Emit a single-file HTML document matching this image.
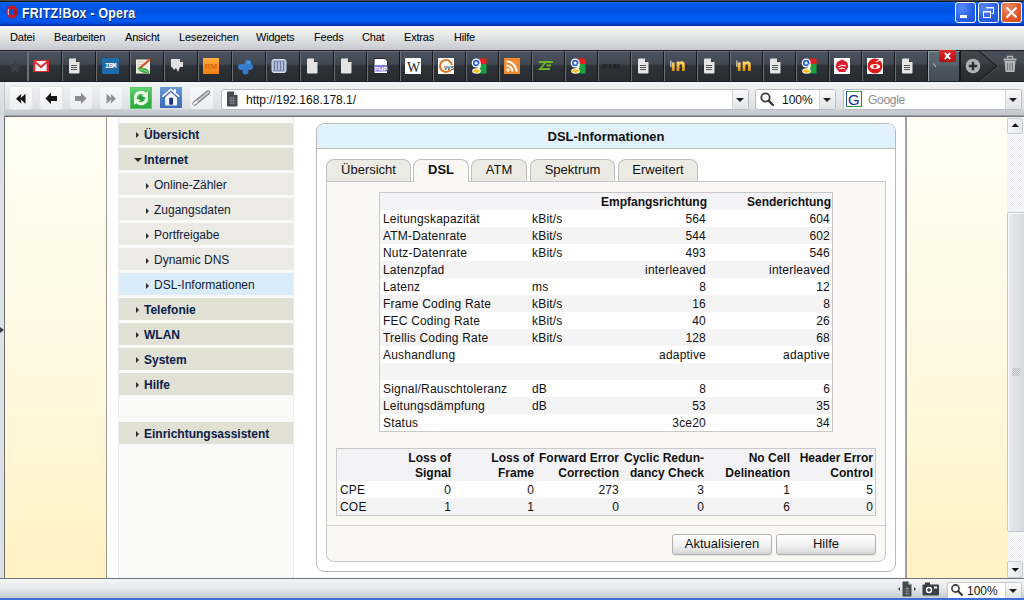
<!DOCTYPE html>
<html><head><meta charset="utf-8"><style>
*{margin:0;padding:0;box-sizing:border-box}
html,body{width:1024px;height:600px;overflow:hidden}
body{position:relative;font-family:"Liberation Sans",sans-serif;background:#fff;color:#000}
.a{position:absolute}
.t{position:absolute;white-space:nowrap;line-height:1}
.nb{font-weight:bold;font-size:12px;color:#0a2048}
.ns{font-size:12px;color:#101c38}
.tb{font-weight:bold;font-size:12px;color:#111}
.tr{font-size:12px;color:#111;letter-spacing:0.2px}
</style></head><body>

<!-- TITLE BAR -->
<div class="a" style="left:0;top:0;width:1024px;height:26px;background:linear-gradient(#4a4a4a 0,#4a4a4a 1px,#101828 1px,#101828 2px,#1a6cff 2px,#0058e8 4px,#0052de 12px,#005ef6 17px,#0058ee 21px,#0044d4 24px,#0030a0 25px,#0030a0 26px)"></div>
<svg class="a" style="left:5px;top:4px" width="14" height="16" viewBox="0 0 14 16"><ellipse cx="7.1" cy="8" rx="3.9" ry="4.9" fill="none" stroke="#c41c24" stroke-width="3.6"/><path d="M3.6 5.2 Q2.8 8 3.6 10.8" stroke="#ffb0a0" stroke-width="1.1" fill="none"/><path d="M10.8 6 Q11.4 8.5 10.6 11" stroke="#8a1018" stroke-width="1" fill="none"/></svg>
<div class="t" style="left:22px;top:5px;font:bold 14px 'Liberation Sans';color:#fff;text-shadow:1px 1px 0 #0a1e6e;letter-spacing:0.3px;transform:scaleX(0.88);transform-origin:0 0">FRITZ!Box - Opera</div>

<!-- window buttons -->
<div class="a" style="left:955px;top:2px;width:21px;height:21px;border:1px solid #fff;border-radius:3px;background:radial-gradient(circle at 30% 25%,#5a8cf8,#2a62ea 55%,#1e52d8)"></div>
<div class="a" style="left:960px;top:15px;width:7px;height:3px;background:#fff"></div>
<div class="a" style="left:978px;top:2px;width:21px;height:21px;border:1px solid #fff;border-radius:3px;background:radial-gradient(circle at 30% 25%,#5a8cf8,#2a62ea 55%,#1e52d8)"></div>
<svg class="a" style="left:978px;top:2px" width="21" height="21" viewBox="0 0 21 21"><path d="M8.5 5.5 H15.5 V11.5 H13.5" fill="none" stroke="#fff" stroke-width="1"/><path d="M8.5 5 H15.5 V6.5 H8.5Z" fill="#fff"/><rect x="5.5" y="9.5" width="7" height="6" fill="none" stroke="#fff" stroke-width="1"/><rect x="5.5" y="9" width="7" height="1.5" fill="#fff"/></svg>
<div class="a" style="left:1001px;top:2px;width:21px;height:21px;border:1px solid #fff;border-radius:3px;background:radial-gradient(circle at 30% 25%,#f08a68,#e05a30 55%,#d04818)"></div>
<svg class="a" style="left:1001px;top:2px" width="21" height="21" viewBox="0 0 21 21"><path d="M5.5 5.5 L15.5 15.5 M15.5 5.5 L5.5 15.5" stroke="#fff" stroke-width="2"/></svg>

<!-- MENU BAR -->
<div class="a" style="left:0;top:26px;width:1024px;height:24px;background:linear-gradient(#f6f7f6,#e8e9ea 35%,#d4d6d9 75%,#c6c9cd)"></div>
<div class="t" style="top:32px;left:10px;font-size:11px;letter-spacing:-0.2px">Datei</div>
<div class="t" style="top:32px;left:54px;font-size:11px;letter-spacing:-0.2px">Bearbeiten</div>
<div class="t" style="top:32px;left:125px;font-size:11px;letter-spacing:-0.2px">Ansicht</div>
<div class="t" style="top:32px;left:179px;font-size:11px;letter-spacing:-0.2px">Lesezeichen</div>
<div class="t" style="top:32px;left:256px;font-size:11px;letter-spacing:-0.2px">Widgets</div>
<div class="t" style="top:32px;left:314px;font-size:11px;letter-spacing:-0.2px">Feeds</div>
<div class="t" style="top:32px;left:362px;font-size:11px;letter-spacing:-0.2px">Chat</div>
<div class="t" style="top:32px;left:404px;font-size:11px;letter-spacing:-0.2px">Extras</div>
<div class="t" style="top:32px;left:454px;font-size:11px;letter-spacing:-0.2px">Hilfe</div>

<!-- BOOKMARK BAR -->
<!--BM-->
<div class="a" style="left:0;top:50px;width:1024px;height:32px;background:#1c1f23"></div>
<div class="a" style="left:0;top:51px;width:28px;height:30px;border-top:1px solid #5c6268;border-right:1px solid #6a7076;background:linear-gradient(#4a525d 0,#414852 12px,#363c44 13px,#2d3239 14px,#272b31 29px,#20242a 30px)"></div>
<svg class="a" style="left:7px;top:59px" width="16" height="16" viewBox="0 0 16 16"><path d="M8 1.5 L10 6 L15 6.3 L11.2 9.5 L12.5 14.5 L8 11.7 L3.5 14.5 L4.8 9.5 L1 6.3 L6 6 Z" fill="#3a3f45"/></svg>
<div class="a" style="left:28px;top:51px;width:34px;height:30px;border-left:1px solid #6a7076;border-right:1px solid #15181b;border-top:1px solid #6a727c;background:linear-gradient(#4a525d 0,#414852 12px,#363c44 13px,#2d3239 14px,#272b31 29px,#20242a 30px)"></div>
<svg class="a" style="left:33px;top:60px" width="16" height="12" viewBox="0 0 16 12"><rect x="0.5" y="0.5" width="15" height="11" fill="#fff4f4" stroke="#d8282e"/><path d="M1.2 1.2 L8 7 L14.8 1.2" fill="none" stroke="#d8282e" stroke-width="1.8"/><path d="M1.5 1.5 V11 M14.5 1.5 V11" stroke="#d8282e" stroke-width="1.6"/></svg>
<div class="a" style="left:62px;top:51px;width:34px;height:30px;border-left:1px solid #6a7076;border-right:1px solid #15181b;border-top:1px solid #6a727c;background:linear-gradient(#4a525d 0,#414852 12px,#363c44 13px,#2d3239 14px,#272b31 29px,#20242a 30px)"></div>
<svg class="a" style="left:68px;top:58px" width="12" height="16" viewBox="0 0 12 16"><path d="M1 1.5 Q1 0.5 2 0.5 L8 0.5 L11.5 4 L11.5 14.5 Q11.5 15.5 10.5 15.5 L2 15.5 Q1 15.5 1 14.5 Z" fill="#e4e4e4"/><path d="M8 0.5 L11.5 4 L8 4 Z" fill="#333"/><path d="M3 7.5 H9 M3 9.5 H9 M3 11.5 H9" stroke="#55585c" stroke-width="1"/></svg>
<div class="a" style="left:96px;top:51px;width:34px;height:30px;border-left:1px solid #6a7076;border-right:1px solid #15181b;border-top:1px solid #6a727c;background:linear-gradient(#4a525d 0,#414852 12px,#363c44 13px,#2d3239 14px,#272b31 29px,#20242a 30px)"></div>
<div class="a" style="left:102px;top:58px;width:17px;height:16px;background:#1f6aa8"></div><div class="t" style="left:102px;width:17px;text-align:center;top:62px;font:bold 7px 'Liberation Mono';color:#fff;letter-spacing:-0.5px">IBM</div>
<div class="a" style="left:130px;top:51px;width:34px;height:30px;border-left:1px solid #6a7076;border-right:1px solid #15181b;border-top:1px solid #6a727c;background:linear-gradient(#4a525d 0,#414852 12px,#363c44 13px,#2d3239 14px,#272b31 29px,#20242a 30px)"></div>
<svg class="a" style="left:135px;top:58px" width="17" height="16" viewBox="0 0 17 16"><rect x="1" y="1.5" width="14" height="14" fill="#f2f0e4"/><path d="M2.5 4 H9 M2.5 6.5 H7 M2.5 9 H6" stroke="#c8c0a8" stroke-width="0.8"/><path d="M5.5 9.5 L15.5 1" stroke="#d84a28" stroke-width="2.2"/><path d="M4.5 10.5 L5.8 9.3" stroke="#703020" stroke-width="1.5"/><ellipse cx="8.5" cy="12.3" rx="6" ry="2.3" transform="rotate(18 8.5 12.3)" fill="#3aa83a"/><path d="M4 11 Q9 12 13 14" stroke="#c8f0c0" stroke-width="0.7" fill="none"/></svg>
<div class="a" style="left:164px;top:51px;width:34px;height:30px;border-left:1px solid #6a7076;border-right:1px solid #15181b;border-top:1px solid #6a727c;background:linear-gradient(#4a525d 0,#414852 12px,#363c44 13px,#2d3239 14px,#272b31 29px,#20242a 30px)"></div>
<svg class="a" style="left:169px;top:58px" width="16" height="16" viewBox="0 0 16 16"><path d="M2 1 L11 1 L14 4 L14 9 L11 9 L9 14 L7 10 L5 12 L3 9 L2 9 Z" fill="#e0e0e0"/><path d="M11 1 L14 4 L11 4Z" fill="#333"/></svg>
<div class="a" style="left:198px;top:51px;width:34px;height:30px;border-left:1px solid #6a7076;border-right:1px solid #15181b;border-top:1px solid #6a727c;background:linear-gradient(#4a525d 0,#414852 12px,#363c44 13px,#2d3239 14px,#272b31 29px,#20242a 30px)"></div>
<div class="a" style="left:203px;top:58px;width:16px;height:16px;background:linear-gradient(#ffb040,#f08010)"></div><div class="t" style="left:203px;width:16px;text-align:center;top:62px;font:bold 8px 'Liberation Sans';color:#e06010">RM</div>
<div class="a" style="left:232px;top:51px;width:34px;height:30px;border-left:1px solid #6a7076;border-right:1px solid #15181b;border-top:1px solid #6a727c;background:linear-gradient(#4a525d 0,#414852 12px,#363c44 13px,#2d3239 14px,#272b31 29px,#20242a 30px)"></div>
<svg class="a" style="left:237px;top:58px" width="17" height="17" viewBox="0 0 17 17"><g fill="#3a7ccc"><circle cx="4" cy="9" r="3"/><circle cx="13" cy="9" r="3"/><circle cx="8.5" cy="13.5" r="3"/><circle cx="11" cy="5" r="3.2"/><rect x="4" y="6" width="9" height="6"/></g><circle cx="11.5" cy="4.5" r="1.5" fill="#5a9ae0"/></svg>
<div class="a" style="left:266px;top:51px;width:34px;height:30px;border-left:1px solid #6a7076;border-right:1px solid #15181b;border-top:1px solid #6a727c;background:linear-gradient(#4a525d 0,#414852 12px,#363c44 13px,#2d3239 14px,#272b31 29px,#20242a 30px)"></div>
<svg class="a" style="left:271px;top:58px" width="16" height="16" viewBox="0 0 16 16"><rect x="1" y="1.5" width="14" height="13" rx="2" fill="#a8b4d0" stroke="#d8e0f0"/><rect x="3" y="3.5" width="10" height="9" fill="#6878a8"/><path d="M5 4 V12 M8 4 V12 M11 4 V12" stroke="#e8ecf8" stroke-width="1.2"/></svg>
<div class="a" style="left:300px;top:51px;width:34px;height:30px;border-left:1px solid #6a7076;border-right:1px solid #15181b;border-top:1px solid #6a727c;background:linear-gradient(#4a525d 0,#414852 12px,#363c44 13px,#2d3239 14px,#272b31 29px,#20242a 30px)"></div>
<svg class="a" style="left:306px;top:58px" width="12" height="16" viewBox="0 0 12 16"><path d="M1 1.5 Q1 0.5 2 0.5 L8 0.5 L11.5 4 L11.5 14.5 Q11.5 15.5 10.5 15.5 L2 15.5 Q1 15.5 1 14.5 Z" fill="#e4e4e4"/><path d="M8 0.5 L11.5 4 L8 4 Z" fill="#333"/></svg>
<div class="a" style="left:334px;top:51px;width:33px;height:30px;border-left:1px solid #6a7076;border-right:1px solid #15181b;border-top:1px solid #6a727c;background:linear-gradient(#4a525d 0,#414852 12px,#363c44 13px,#2d3239 14px,#272b31 29px,#20242a 30px)"></div>
<svg class="a" style="left:340px;top:58px" width="12" height="16" viewBox="0 0 12 16"><path d="M1 1.5 Q1 0.5 2 0.5 L8 0.5 L11.5 4 L11.5 14.5 Q11.5 15.5 10.5 15.5 L2 15.5 Q1 15.5 1 14.5 Z" fill="#e4e4e4"/><path d="M8 0.5 L11.5 4 L8 4 Z" fill="#333"/></svg>
<div class="a" style="left:367px;top:51px;width:33px;height:30px;border-left:1px solid #6a7076;border-right:1px solid #15181b;border-top:1px solid #6a727c;background:linear-gradient(#4a525d 0,#414852 12px,#363c44 13px,#2d3239 14px,#272b31 29px,#20242a 30px)"></div>
<svg class="a" style="left:372px;top:58px" width="17" height="16" viewBox="0 0 17 16"><path d="M2 0.5 H13 L15.5 3 V15.5 H2 Z" fill="#fff" stroke="#222"/><rect x="2.5" y="7" width="13" height="6.5" fill="#8080d8"/><text x="9" y="12.6" font-family="Liberation Sans" font-size="6" font-weight="bold" fill="#fff" text-anchor="middle">PHP</text></svg>
<div class="a" style="left:400px;top:51px;width:33px;height:30px;border-left:1px solid #6a7076;border-right:1px solid #15181b;border-top:1px solid #6a727c;background:linear-gradient(#4a525d 0,#414852 12px,#363c44 13px,#2d3239 14px,#272b31 29px,#20242a 30px)"></div>
<div class="a" style="left:405px;top:58px;width:16px;height:16px;background:#fff"></div><div class="t" style="left:405px;width:16px;text-align:center;top:60px;font:14px 'Liberation Serif';color:#222;letter-spacing:-1px">W</div>
<div class="a" style="left:433px;top:51px;width:33px;height:30px;border-left:1px solid #6a7076;border-right:1px solid #15181b;border-top:1px solid #6a727c;background:linear-gradient(#4a525d 0,#414852 12px,#363c44 13px,#2d3239 14px,#272b31 29px,#20242a 30px)"></div>
<svg class="a" style="left:438px;top:58px" width="16" height="16" viewBox="0 0 16 16"><rect width="16" height="16" fill="#fff"/><circle cx="8" cy="8" r="6" fill="none" stroke="#e07828" stroke-width="2.2"/><rect x="6" y="7" width="10" height="5" fill="#fff"/><text x="11" y="11.5" font-family="Liberation Sans" font-size="5" font-weight="bold" fill="#333" text-anchor="middle">VVS</text></svg>
<div class="a" style="left:466px;top:51px;width:33px;height:30px;border-left:1px solid #6a7076;border-right:1px solid #15181b;border-top:1px solid #6a727c;background:linear-gradient(#4a525d 0,#414852 12px,#363c44 13px,#2d3239 14px,#272b31 29px,#20242a 30px)"></div>
<svg class="a" style="left:471px;top:58px" width="16" height="16" viewBox="0 0 16 16"><rect x="8" y="0.5" width="7.5" height="5.5" fill="#e42020"/><rect x="7" y="6" width="8.5" height="9.5" fill="#1ca040"/><circle cx="5.2" cy="5" r="4.5" fill="#fff"/><circle cx="5.2" cy="5" r="3.3" fill="#2a62d8"/><circle cx="5.2" cy="5" r="1.5" fill="#fff"/><path d="M8.5 6 Q9.5 10 6 11" stroke="#fff" stroke-width="2.2" fill="none"/><ellipse cx="5.5" cy="13" rx="4.3" ry="2.7" fill="#fff"/><ellipse cx="5.5" cy="13" rx="3.3" ry="1.8" fill="#f6c020"/></svg>
<div class="a" style="left:499px;top:51px;width:33px;height:30px;border-left:1px solid #6a7076;border-right:1px solid #15181b;border-top:1px solid #6a727c;background:linear-gradient(#4a525d 0,#414852 12px,#363c44 13px,#2d3239 14px,#272b31 29px,#20242a 30px)"></div>
<svg class="a" style="left:504px;top:58px" width="16" height="16" viewBox="0 0 16 16"><rect width="16" height="16" fill="#f08a30"/><circle cx="4" cy="12" r="1.8" fill="#fff"/><path d="M2.5 7.5 A6 6 0 0 1 8.5 13.5 M2.5 3.5 A10 10 0 0 1 12.5 13.5" stroke="#fff" stroke-width="2" fill="none"/></svg>
<div class="a" style="left:532px;top:51px;width:33px;height:30px;border-left:1px solid #6a7076;border-right:1px solid #15181b;border-top:1px solid #6a727c;background:linear-gradient(#4a525d 0,#414852 12px,#363c44 13px,#2d3239 14px,#272b31 29px,#20242a 30px)"></div>
<svg class="a" style="left:537px;top:58px" width="17" height="16" viewBox="0 0 17 16"><path d="M2 4 H9 L3 11 H9 M10 4 H16 M9.5 7.5 H14 M8 11 H13" stroke="#6cb820" stroke-width="1.8" fill="none"/></svg>
<div class="a" style="left:565px;top:51px;width:33px;height:30px;border-left:1px solid #6a7076;border-right:1px solid #15181b;border-top:1px solid #6a727c;background:linear-gradient(#4a525d 0,#414852 12px,#363c44 13px,#2d3239 14px,#272b31 29px,#20242a 30px)"></div>
<svg class="a" style="left:570px;top:58px" width="16" height="16" viewBox="0 0 16 16"><rect x="8" y="0.5" width="7.5" height="5.5" fill="#e42020"/><rect x="7" y="6" width="8.5" height="9.5" fill="#1ca040"/><circle cx="5.2" cy="5" r="4.5" fill="#fff"/><circle cx="5.2" cy="5" r="3.3" fill="#2a62d8"/><circle cx="5.2" cy="5" r="1.5" fill="#fff"/><path d="M8.5 6 Q9.5 10 6 11" stroke="#fff" stroke-width="2.2" fill="none"/><ellipse cx="5.5" cy="13" rx="4.3" ry="2.7" fill="#fff"/><ellipse cx="5.5" cy="13" rx="3.3" ry="1.8" fill="#f6c020"/></svg>
<div class="a" style="left:598px;top:51px;width:33px;height:30px;border-left:1px solid #6a7076;border-right:1px solid #15181b;border-top:1px solid #6a727c;background:linear-gradient(#4a525d 0,#414852 12px,#363c44 13px,#2d3239 14px,#272b31 29px,#20242a 30px)"></div>
<div class="t" style="left:600px;width:22px;text-align:center;top:62px;font:7px 'Liberation Sans';color:#101214;letter-spacing:0.2px">areas</div>
<div class="a" style="left:631px;top:51px;width:33px;height:30px;border-left:1px solid #6a7076;border-right:1px solid #15181b;border-top:1px solid #6a727c;background:linear-gradient(#4a525d 0,#414852 12px,#363c44 13px,#2d3239 14px,#272b31 29px,#20242a 30px)"></div>
<svg class="a" style="left:637px;top:58px" width="12" height="16" viewBox="0 0 12 16"><path d="M1 1.5 Q1 0.5 2 0.5 L8 0.5 L11.5 4 L11.5 14.5 Q11.5 15.5 10.5 15.5 L2 15.5 Q1 15.5 1 14.5 Z" fill="#e4e4e4"/><path d="M8 0.5 L11.5 4 L8 4 Z" fill="#333"/><path d="M3 7.5 H9 M3 9.5 H9 M3 11.5 H9" stroke="#55585c" stroke-width="1"/></svg>
<div class="a" style="left:664px;top:51px;width:33px;height:30px;border-left:1px solid #6a7076;border-right:1px solid #15181b;border-top:1px solid #6a727c;background:linear-gradient(#4a525d 0,#414852 12px,#363c44 13px,#2d3239 14px,#272b31 29px,#20242a 30px)"></div>
<svg class="a" style="left:669px;top:58px" width="17" height="16" viewBox="0 0 17 16"><defs><linearGradient id="ig677" x1="0" y1="0" x2="0" y2="1"><stop offset="0" stop-color="#ffe080"/><stop offset="0.5" stop-color="#f4b830"/><stop offset="1" stop-color="#d88a10"/></linearGradient></defs><rect x="2.8" y="4.5" width="2.8" height="8.5" fill="url(#ig677)"/><path d="M7.6 13 V3.5 H10.4 V4.3 Q12 3 14 3.5 Q15.8 4 15.8 6.5 V13 H13 V7 Q13 6.2 12 6.2 Q10.4 6.2 10.4 7.5 V13 Z" fill="url(#ig677)"/><path d="M1.8 2.5 V9" stroke="#d0d4d8" stroke-width="1.2"/></svg>
<div class="a" style="left:697px;top:51px;width:33px;height:30px;border-left:1px solid #6a7076;border-right:1px solid #15181b;border-top:1px solid #6a727c;background:linear-gradient(#4a525d 0,#414852 12px,#363c44 13px,#2d3239 14px,#272b31 29px,#20242a 30px)"></div>
<svg class="a" style="left:703px;top:58px" width="12" height="16" viewBox="0 0 12 16"><path d="M1 1.5 Q1 0.5 2 0.5 L8 0.5 L11.5 4 L11.5 14.5 Q11.5 15.5 10.5 15.5 L2 15.5 Q1 15.5 1 14.5 Z" fill="#e4e4e4"/><path d="M8 0.5 L11.5 4 L8 4 Z" fill="#333"/><path d="M3 7.5 H9 M3 9.5 H9 M3 11.5 H9" stroke="#55585c" stroke-width="1"/></svg>
<div class="a" style="left:730px;top:51px;width:33px;height:30px;border-left:1px solid #6a7076;border-right:1px solid #15181b;border-top:1px solid #6a727c;background:linear-gradient(#4a525d 0,#414852 12px,#363c44 13px,#2d3239 14px,#272b31 29px,#20242a 30px)"></div>
<svg class="a" style="left:735px;top:58px" width="17" height="16" viewBox="0 0 17 16"><defs><linearGradient id="ig743" x1="0" y1="0" x2="0" y2="1"><stop offset="0" stop-color="#ffe080"/><stop offset="0.5" stop-color="#f4b830"/><stop offset="1" stop-color="#d88a10"/></linearGradient></defs><rect x="2.8" y="4.5" width="2.8" height="8.5" fill="url(#ig743)"/><path d="M7.6 13 V3.5 H10.4 V4.3 Q12 3 14 3.5 Q15.8 4 15.8 6.5 V13 H13 V7 Q13 6.2 12 6.2 Q10.4 6.2 10.4 7.5 V13 Z" fill="url(#ig743)"/><path d="M1.8 2.5 V9" stroke="#d0d4d8" stroke-width="1.2"/></svg>
<div class="a" style="left:763px;top:51px;width:33px;height:30px;border-left:1px solid #6a7076;border-right:1px solid #15181b;border-top:1px solid #6a727c;background:linear-gradient(#4a525d 0,#414852 12px,#363c44 13px,#2d3239 14px,#272b31 29px,#20242a 30px)"></div>
<svg class="a" style="left:769px;top:58px" width="12" height="16" viewBox="0 0 12 16"><path d="M1 1.5 Q1 0.5 2 0.5 L8 0.5 L11.5 4 L11.5 14.5 Q11.5 15.5 10.5 15.5 L2 15.5 Q1 15.5 1 14.5 Z" fill="#e4e4e4"/><path d="M8 0.5 L11.5 4 L8 4 Z" fill="#333"/><path d="M3 7.5 H9 M3 9.5 H9 M3 11.5 H9" stroke="#55585c" stroke-width="1"/></svg>
<div class="a" style="left:796px;top:51px;width:33px;height:30px;border-left:1px solid #6a7076;border-right:1px solid #15181b;border-top:1px solid #6a727c;background:linear-gradient(#4a525d 0,#414852 12px,#363c44 13px,#2d3239 14px,#272b31 29px,#20242a 30px)"></div>
<svg class="a" style="left:801px;top:58px" width="16" height="16" viewBox="0 0 16 16"><rect x="8" y="0.5" width="7.5" height="5.5" fill="#e42020"/><rect x="7" y="6" width="8.5" height="9.5" fill="#1ca040"/><circle cx="5.2" cy="5" r="4.5" fill="#fff"/><circle cx="5.2" cy="5" r="3.3" fill="#2a62d8"/><circle cx="5.2" cy="5" r="1.5" fill="#fff"/><path d="M8.5 6 Q9.5 10 6 11" stroke="#fff" stroke-width="2.2" fill="none"/><ellipse cx="5.5" cy="13" rx="4.3" ry="2.7" fill="#fff"/><ellipse cx="5.5" cy="13" rx="3.3" ry="1.8" fill="#f6c020"/></svg>
<div class="a" style="left:829px;top:51px;width:33px;height:30px;border-left:1px solid #6a7076;border-right:1px solid #15181b;border-top:1px solid #6a727c;background:linear-gradient(#4a525d 0,#414852 12px,#363c44 13px,#2d3239 14px,#272b31 29px,#20242a 30px)"></div>
<svg class="a" style="left:834px;top:58px" width="16" height="16" viewBox="0 0 16 16"><rect width="16" height="16" fill="#fff"/><path d="M3 4 L8 1.5 L13 4 L14.5 9 L11 14 L5 14 L1.5 9 Z" fill="#d82030"/><path d="M4 9 Q7 6 12 8 M5 11 Q8 9 11 11" stroke="#fff" stroke-width="1" fill="none"/></svg>
<div class="a" style="left:862px;top:51px;width:33px;height:30px;border-left:1px solid #6a7076;border-right:1px solid #15181b;border-top:1px solid #6a727c;background:linear-gradient(#4a525d 0,#414852 12px,#363c44 13px,#2d3239 14px,#272b31 29px,#20242a 30px)"></div>
<svg class="a" style="left:867px;top:58px" width="16" height="16" viewBox="0 0 16 16"><rect width="16" height="16" fill="#fff"/><circle cx="8" cy="8" r="7.5" fill="#e01818"/><ellipse cx="8" cy="8.5" rx="5" ry="2.5" fill="#fff"/><circle cx="8" cy="8.5" r="1.8" fill="#e01818"/><path d="M9 4 L13 2" stroke="#fff" stroke-width="1.2"/></svg>
<div class="a" style="left:895px;top:51px;width:33px;height:30px;border-left:1px solid #6a7076;border-right:1px solid #15181b;border-top:1px solid #6a727c;background:linear-gradient(#4a525d 0,#414852 12px,#363c44 13px,#2d3239 14px,#272b31 29px,#20242a 30px)"></div>
<svg class="a" style="left:901px;top:58px" width="12" height="16" viewBox="0 0 12 16"><path d="M1 1.5 Q1 0.5 2 0.5 L8 0.5 L11.5 4 L11.5 14.5 Q11.5 15.5 10.5 15.5 L2 15.5 Q1 15.5 1 14.5 Z" fill="#e4e4e4"/><path d="M8 0.5 L11.5 4 L8 4 Z" fill="#333"/><path d="M3 7.5 H9 M3 9.5 H9 M3 11.5 H9" stroke="#55585c" stroke-width="1"/></svg>
<div class="a" style="left:928px;top:51px;width:32px;height:30px;border-left:1px solid #9aa4ac;border-right:1px solid #15181b;border-top:1px solid #8a949c;background:linear-gradient(#5e6a74,#56616b 13px,#4c565f 15px,#444d56 30px)"></div>
<div class="a" style="left:939px;top:50px;width:17px;height:12px;border-radius:0 0 2px 2px;background:linear-gradient(#e02a2a,#b01010)"></div>
<svg class="a" style="left:939px;top:50px" width="17" height="12" viewBox="0 0 17 12"><path d="M5.8 2.8 L11.2 9.2 M11.2 2.8 L5.8 9.2" stroke="#fff" stroke-width="1.8"/></svg>
<svg class="a" style="left:933px;top:63px" width="4" height="5" viewBox="0 0 4 5"><path d="M0.5 0.5 L3 4" stroke="#c0c8d0" stroke-width="1"/></svg>
<div class="a" style="left:960px;top:51px;width:64px;height:30px;border-left:1px solid #15181b;background:linear-gradient(#40464e,#3a4047 12px,#30353b 14px,#262a2f 30px)"></div>
<svg class="a" style="left:960px;top:51px" width="64" height="30" viewBox="0 0 64 30"><path d="M19 0 L37 15 L19 30 L64 30 L64 0 Z" fill="#ffffff" fill-opacity="0.05"/><path d="M19 0 L37 15 L19 30" stroke="#1a1d21" stroke-width="1.2" fill="none"/><path d="M20.5 0 L38.5 15 L20.5 30" stroke="#5a6068" stroke-width="0.6" fill="none"/><circle cx="13" cy="15" r="7.3" fill="#b0b2b5"/><path d="M13 10.8 V19.2 M8.8 15 H17.2" stroke="#2a2d30" stroke-width="2.4"/><path d="M43.5 8.5 H56.5" stroke="#b4b6b8" stroke-width="2"/><path d="M47.5 7.5 V5.5 H52.5 V7.5" stroke="#b4b6b8" stroke-width="1.4" fill="none"/><path d="M44.5 10 H55.5 L54.5 21 H45.5 Z" fill="#b4b6b8"/><path d="M47.6 12 V19.5 M50 12 V19.5 M52.4 12 V19.5" stroke="#6a6d70" stroke-width="0.9"/></svg>
<!--/BM-->

<!-- ADDRESS BAR -->
<div class="a" style="left:0;top:82px;width:1024px;height:35px;background:linear-gradient(#f2f3f4 0,#e8e9ec 14px,#dcdee2 27px,#c9cdd2 28px,#c4c8cd 33px,#74787e 34px,#74787e 35px)"></div>

<div class="a" style="left:0;top:82px;width:4px;height:34px;background:linear-gradient(#e4e7eb,#d6dade)"></div>
<div class="a" style="left:4px;top:82px;width:1px;height:34px;background:#c4c8cd"></div>
<!-- nav buttons -->
<div class="a" style="left:10px;top:87px;width:22px;height:22px;border-radius:3px;background:linear-gradient(#fbfbfb,#eeeff1);box-shadow:0 0 0 1px #e6e7ea"></div>
<div class="a" style="left:40px;top:87px;width:22px;height:22px;border-radius:3px;background:linear-gradient(#fbfbfb,#eeeff1);box-shadow:0 0 0 1px #e6e7ea"></div>
<div class="a" style="left:70px;top:87px;width:22px;height:22px;border-radius:3px;background:linear-gradient(#f6f7f8,#eceef0);"></div>
<div class="a" style="left:100px;top:87px;width:22px;height:22px;border-radius:3px;background:linear-gradient(#f6f7f8,#eceef0);"></div>
<svg class="a" style="left:10px;top:87px" width="22" height="22" viewBox="0 0 22 22"><path d="M6 11.8 L11.5 6.8 L10.5 11.8 L11.5 16.8 Z M10 11.8 L15.5 6.8 L15.5 16.8 Z" fill="#151515"/></svg>
<svg class="a" style="left:40px;top:87px" width="22" height="22" viewBox="0 0 22 22"><path d="M5.5 11.5 L11 5.5 L11 9 L17 9 L17 14 L11 14 L11 17 Z" fill="#151515"/></svg>
<svg class="a" style="left:70px;top:87px" width="22" height="22" viewBox="0 0 22 22"><path d="M16.5 11.5 L11 5.5 L11 9 L5 9 L5 14 L11 14 L11 17 Z" fill="#8e8e8e"/></svg>
<svg class="a" style="left:100px;top:87px" width="22" height="22" viewBox="0 0 22 22"><path d="M16 11.8 L10.5 6.8 L11.5 11.8 L10.5 16.8 Z M12 11.8 L6.5 6.8 L6.5 16.8 Z" fill="#8e8e8e"/></svg>
<!-- reload -->
<div class="a" style="left:130px;top:87px;width:22px;height:22px;background:linear-gradient(#6ad478,#3dbb50 40%,#2aa83e);box-shadow:inset 0 0 0 1px #58c868"></div>
<svg class="a" style="left:130px;top:87px" width="22" height="22" viewBox="0 0 22 22"><circle cx="11" cy="11" r="2.5" fill="#2c9a3c"/><path d="M5.3 11.5 A5.7 5.7 0 0 1 14.8 6.8" stroke="#f0fbe8" stroke-width="3" fill="none"/><path d="M18 4 L17.8 11 L11.5 9 Z" fill="#f0fbe8"/><path d="M16.7 10.5 A5.7 5.7 0 0 1 7.2 15.2" stroke="#f0fbe8" stroke-width="3" fill="none"/><path d="M4 18 L4.2 11 L10.5 13 Z" fill="#f0fbe8"/></svg>
<!-- home -->
<div class="a" style="left:160px;top:87px;width:22px;height:21px;background:linear-gradient(#6e9ed8,#4a80c8 50%,#3a6cb8)"></div>
<svg class="a" style="left:160px;top:87px" width="22" height="22" viewBox="0 0 22 22"><path d="M5.2 10 L11 5 L17 10 L17 18.4 L5.2 18.4 Z" fill="#f2f6ff"/><path d="M2.3 10.2 L11 2.8 L19.3 10.2" stroke="#2c58a8" stroke-width="3.4" fill="none"/><path d="M2.3 9.7 L11 2.3 L19.3 9.7" stroke="#f6f9ff" stroke-width="2" fill="none"/><rect x="14" y="2" width="2" height="4.5" fill="#f6f9ff"/><rect x="9.2" y="10.8" width="3.8" height="7" rx="0.8" fill="#1c2e90"/></svg>
<!-- wand -->
<div class="a" style="left:190px;top:87px;width:23px;height:22px;border-radius:3px;background:linear-gradient(#f6f7f8,#eceef0)"></div>
<svg class="a" style="left:190px;top:87px" width="23" height="22" viewBox="0 0 23 22"><path d="M4.5 16.5 L18 5.5" stroke="#7a7c80" stroke-width="4.2" stroke-linecap="round"/><path d="M4.5 16.5 L18 5.5" stroke="#c8cacc" stroke-width="2.2" stroke-linecap="round"/><path d="M4.2 16.8 L6.5 14.9" stroke="#fff" stroke-width="2" stroke-linecap="round"/></svg>

<!-- address field -->
<div class="a" style="left:221px;top:89px;width:528px;height:21px;border:1px solid #b9bcc1;border-radius:3px;background:#fff"></div>
<div class="a" style="left:732px;top:90px;width:16px;height:19px;border-left:1px solid #d0d3d7;border-radius:0 2px 2px 0;background:linear-gradient(#fafafa,#e2e4e7)"></div>
<div class="a" style="left:736px;top:98px;width:0;height:0;border-top:4px solid #222;border-left:4px solid transparent;border-right:4px solid transparent"></div>
<svg class="a" style="left:226px;top:91px" width="12" height="16" viewBox="0 0 12 16"><path d="M1 1.5 Q1 0.5 2 0.5 L8 0.5 L11.5 4 L11.5 14.5 Q11.5 15.5 10.5 15.5 L2 15.5 Q1 15.5 1 14.5 Z" fill="#45484d"/><path d="M8 0.5 L11.5 4 L8 4 Z" fill="#e8e8e8"/><path d="M3 7 H9.5 M3 9.5 H9.5 M3 12 H9.5 M5 5.5 V13.5 M7.5 5.5 V13.5" stroke="#7e8288" stroke-width="0.9"/></svg>
<div class="t" style="left:246px;top:94px;font-size:12px;color:#111">http://192.168.178.1/</div>

<!-- zoom field -->
<div class="a" style="left:755px;top:89px;width:81px;height:21px;border:1px solid #b9bcc1;border-radius:3px;background:#fff"></div>
<div class="a" style="left:819px;top:90px;width:16px;height:19px;border-left:1px solid #d0d3d7;border-radius:0 2px 2px 0;background:linear-gradient(#fafafa,#e2e4e7)"></div>
<div class="a" style="left:823px;top:98px;width:0;height:0;border-top:4px solid #222;border-left:4px solid transparent;border-right:4px solid transparent"></div>
<svg class="a" style="left:759px;top:91px" width="16" height="16" viewBox="0 0 16 16"><circle cx="6.5" cy="6.5" r="4.2" fill="none" stroke="#3a3a3a" stroke-width="1.8"/><path d="M9.6 9.6 L14 14" stroke="#3a3a3a" stroke-width="2.4" stroke-linecap="round"/></svg>
<div class="t" style="left:782px;top:94px;font-size:12px;color:#111">100%</div>

<!-- search field -->
<div class="a" style="left:843px;top:89px;width:179px;height:21px;border:1px solid #b9bcc1;border-radius:3px;background:#fff"></div>
<div class="a" style="left:1005px;top:90px;width:16px;height:19px;border-left:1px solid #d0d3d7;border-radius:0 2px 2px 0;background:linear-gradient(#fafafa,#e2e4e7)"></div>
<div class="a" style="left:1009px;top:98px;width:0;height:0;border-top:4px solid #222;border-left:4px solid transparent;border-right:4px solid transparent"></div>
<div class="a" style="left:846px;top:91px;width:16px;height:16px;background:#fff;border:1px solid;border-color:#4a9a50 #b84030 #3a9040 #2850a8"></div>
<div class="t" style="left:848px;top:92px;font-size:15px;color:#1a2a98">G</div>
<div class="t" style="left:868px;top:94px;font-size:12px;color:#8e8e8e;letter-spacing:-0.3px">Google</div>

<!-- CONTENT -->
<div class="a" style="left:0;top:116px;width:1024px;height:462px;background:#fff"></div>
<div class="a" style="left:0;top:116px;width:4px;height:462px;background:#dde1e6"></div>
<div class="a" style="left:4px;top:116px;width:1px;height:462px;background:#6e6e6e"></div>
<div class="a" style="left:0;top:327px;width:0;height:0;border-left:4px solid #3a3e44;border-top:3px solid transparent;border-bottom:3px solid transparent"></div>
<div class="a" style="left:5px;top:116px;width:101px;height:462px;background:linear-gradient(#fffdf4,#fff9e3 50%,#fff2c2)"></div>
<div class="a" style="left:106px;top:116px;width:1px;height:462px;background:#9a9a92"></div>
<div class="a" style="left:905px;top:116px;width:2px;height:462px;background:#a0a0a0"></div>
<div class="a" style="left:907px;top:116px;width:100px;height:462px;background:linear-gradient(#fffdf4,#fff9e3 50%,#fff2c2)"></div>

<!-- scrollbar -->
<div class="a" style="left:1007px;top:116px;width:17px;height:462px;background-color:#f4f5f6;background-image:repeating-conic-gradient(#e8eaed 0 25%,#fdfdfd 0 50%);background-size:2px 2px"></div>
<div class="a" style="left:1007px;top:118px;width:16px;height:16px;background:linear-gradient(90deg,#f6f7f8,#e4e6e9);border:1px solid #c8ccd0;border-radius:2px"></div>
<svg class="a" style="left:1007px;top:118px" width="16" height="16" viewBox="0 0 16 16"><path d="M4.5 9 L8.3 5.2 L12 9 Z" fill="#111"/></svg>
<div class="a" style="left:1007px;top:212px;width:18px;height:320px;background:linear-gradient(90deg,#eceef1,#e2e4e8 30%,#dcdfe4 60%,#d6d9de);border:1px solid #c4c8ce;border-radius:2px;box-shadow:inset 1px 1px 0 #f8f9fa"></div>
<div class="a" style="left:1012px;top:368px;width:8px;height:8px;background-image:repeating-conic-gradient(#b8bcc2 0 25%,transparent 0 50%);background-size:2px 2px"></div>
<div class="a" style="left:1007px;top:561px;width:16px;height:17px;background:linear-gradient(90deg,#f6f7f8,#e4e6e9);border:1px solid #c8ccd0;border-radius:2px"></div>
<svg class="a" style="left:1007px;top:561px" width="16" height="17" viewBox="0 0 16 17"><path d="M4.5 7 L8.3 10.8 L12 7 Z" fill="#111"/></svg>

<!-- sidebar -->
<div class="a" style="left:119px;top:116px;width:174px;height:462px;background:#f9f9f8"></div>
<div class="a" style="left:293px;top:116px;width:1px;height:462px;background:#ececec"></div>
<div class="a" style="left:118px;top:116px;width:1px;height:462px;background:#ececec"></div>
<div class="a" style="left:119px;top:123px;width:174px;height:22px;background:#e1e0d5"></div>
<div class="a" style="left:136px;top:132px;width:0;height:0;border-left:3px solid #2a2a2a;border-top:3px solid transparent;border-bottom:3px solid transparent"></div>
<div class="t nb" style="left:144px;top:129px">Übersicht</div>
<div class="a" style="left:119px;top:148px;width:174px;height:22px;background:#e1e0d5"></div>
<div class="a" style="left:134px;top:158px;width:0;height:0;border-top:4px solid #2a2a2a;border-left:4px solid transparent;border-right:4px solid transparent"></div>
<div class="t nb" style="left:144px;top:154px">Internet</div>
<div class="a" style="left:119px;top:173px;width:174px;height:22px;background:#ebeae4"></div>
<div class="a" style="left:146px;top:183px;width:0;height:0;border-left:3px solid #2a2a2a;border-top:3px solid transparent;border-bottom:3px solid transparent"></div>
<div class="t ns" style="left:154px;top:179px">Online-Zähler</div>
<div class="a" style="left:119px;top:198px;width:174px;height:22px;background:#ebeae4"></div>
<div class="a" style="left:146px;top:208px;width:0;height:0;border-left:3px solid #2a2a2a;border-top:3px solid transparent;border-bottom:3px solid transparent"></div>
<div class="t ns" style="left:154px;top:204px">Zugangsdaten</div>
<div class="a" style="left:119px;top:223px;width:174px;height:22px;background:#ebeae4"></div>
<div class="a" style="left:146px;top:233px;width:0;height:0;border-left:3px solid #2a2a2a;border-top:3px solid transparent;border-bottom:3px solid transparent"></div>
<div class="t ns" style="left:154px;top:229px">Portfreigabe</div>
<div class="a" style="left:119px;top:248px;width:174px;height:22px;background:#ebeae4"></div>
<div class="a" style="left:146px;top:258px;width:0;height:0;border-left:3px solid #2a2a2a;border-top:3px solid transparent;border-bottom:3px solid transparent"></div>
<div class="t ns" style="left:154px;top:254px">Dynamic DNS</div>
<div class="a" style="left:119px;top:273px;width:174px;height:22px;background:#daecf8"></div>
<div class="a" style="left:146px;top:283px;width:0;height:0;border-left:3px solid #2a2a2a;border-top:3px solid transparent;border-bottom:3px solid transparent"></div>
<div class="t ns" style="left:154px;top:279px">DSL-Informationen</div>
<div class="a" style="left:119px;top:298px;width:174px;height:22px;background:#e1e0d5"></div>
<div class="a" style="left:136px;top:307px;width:0;height:0;border-left:3px solid #2a2a2a;border-top:3px solid transparent;border-bottom:3px solid transparent"></div>
<div class="t nb" style="left:144px;top:304px">Telefonie</div>
<div class="a" style="left:119px;top:323px;width:174px;height:22px;background:#e1e0d5"></div>
<div class="a" style="left:136px;top:332px;width:0;height:0;border-left:3px solid #2a2a2a;border-top:3px solid transparent;border-bottom:3px solid transparent"></div>
<div class="t nb" style="left:144px;top:329px">WLAN</div>
<div class="a" style="left:119px;top:348px;width:174px;height:22px;background:#e1e0d5"></div>
<div class="a" style="left:136px;top:357px;width:0;height:0;border-left:3px solid #2a2a2a;border-top:3px solid transparent;border-bottom:3px solid transparent"></div>
<div class="t nb" style="left:144px;top:354px">System</div>
<div class="a" style="left:119px;top:373px;width:174px;height:22px;background:#e1e0d5"></div>
<div class="a" style="left:136px;top:382px;width:0;height:0;border-left:3px solid #2a2a2a;border-top:3px solid transparent;border-bottom:3px solid transparent"></div>
<div class="t nb" style="left:144px;top:379px">Hilfe</div>
<div class="a" style="left:119px;top:422px;width:174px;height:22px;background:#e1e0d5"></div>
<div class="a" style="left:136px;top:431px;width:0;height:0;border-left:3px solid #2a2a2a;border-top:3px solid transparent;border-bottom:3px solid transparent"></div>
<div class="t nb" style="left:144px;top:428px">Einrichtungsassistent</div>


<!-- MAIN BOX -->
<div class="a" style="left:316px;top:123px;width:580px;height:449px;border:1px solid #b9b9b9;border-radius:8px;background:#fff"></div>
<div class="a" style="left:317px;top:124px;width:578px;height:24px;border-radius:7px 7px 0 0;background:#e0f1fc"></div>
<div class="a" style="left:317px;top:148px;width:578px;height:1px;background:#b9b9b9"></div>
<div class="t" style="left:316px;width:580px;text-align:center;top:130px;font-weight:bold;font-size:13px;color:#111">DSL-Informationen</div>

<!-- panel -->
<div class="a" style="left:326px;top:181px;width:560px;height:381px;border:1px solid #c6c6c6;border-radius:0 0 8px 8px;background:#f9f8f4"></div>
<div class="a" style="left:327px;top:525px;width:558px;height:1px;background:#cfcfcf"></div>
<div class="a" style="left:326px;top:159px;width:85px;height:22px;border:1px solid #bfbfbf;border-bottom:none;border-radius:8px 8px 0 0;background:#ebeae3"></div>
<div class="t" style="left:326px;width:85px;text-align:center;top:163px;font-size:13px;font-weight:normal;color:#111">Übersicht</div>
<div class="a" style="left:413px;top:159px;width:56px;height:23px;border:1px solid #bfbfbf;border-bottom:none;border-radius:8px 8px 0 0;background:#f9f8f4"></div>
<div class="t" style="left:413px;width:56px;text-align:center;top:163px;font-size:13px;font-weight:bold;color:#111">DSL</div>
<div class="a" style="left:471px;top:159px;width:56px;height:22px;border:1px solid #bfbfbf;border-bottom:none;border-radius:8px 8px 0 0;background:#ebeae3"></div>
<div class="t" style="left:471px;width:56px;text-align:center;top:163px;font-size:13px;font-weight:normal;color:#111">ATM</div>
<div class="a" style="left:530px;top:159px;width:85px;height:22px;border:1px solid #bfbfbf;border-bottom:none;border-radius:8px 8px 0 0;background:#ebeae3"></div>
<div class="t" style="left:530px;width:85px;text-align:center;top:163px;font-size:13px;font-weight:normal;color:#111">Spektrum</div>
<div class="a" style="left:618px;top:159px;width:80px;height:22px;border:1px solid #bfbfbf;border-bottom:none;border-radius:8px 8px 0 0;background:#ebeae3"></div>
<div class="t" style="left:618px;width:80px;text-align:center;top:163px;font-size:13px;font-weight:normal;color:#111">Erweitert</div>
<div class="a" style="left:379px;top:192px;width:454px;height:240px;border:1px solid #c9c9c9;background:#fff"></div>
<div class="a" style="left:380px;top:193px;width:452px;height:17px;background:#f3f3f6"></div>
<div class="t tb" style="left:501px;width:206px;text-align:right;top:196px">Empfangsrichtung</div>
<div class="t tb" style="left:707px;width:124px;text-align:right;top:196px">Senderichtung</div>
<div class="t tr" style="left:383px;top:213px">Leitungskapazität</div>
<div class="t tr" style="left:532px;top:213px">kBit/s</div>
<div class="t tr" style="left:560px;width:146px;text-align:right;top:213px">564</div>
<div class="t tr" style="left:706px;width:124px;text-align:right;top:213px">604</div>
<div class="a" style="left:380px;top:227px;width:452px;height:17px;background:#f4f4f4"></div>
<div class="t tr" style="left:383px;top:230px">ATM-Datenrate</div>
<div class="t tr" style="left:532px;top:230px">kBit/s</div>
<div class="t tr" style="left:560px;width:146px;text-align:right;top:230px">544</div>
<div class="t tr" style="left:706px;width:124px;text-align:right;top:230px">602</div>
<div class="t tr" style="left:383px;top:247px">Nutz-Datenrate</div>
<div class="t tr" style="left:532px;top:247px">kBit/s</div>
<div class="t tr" style="left:560px;width:146px;text-align:right;top:247px">493</div>
<div class="t tr" style="left:706px;width:124px;text-align:right;top:247px">546</div>
<div class="a" style="left:380px;top:261px;width:452px;height:17px;background:#f4f4f4"></div>
<div class="t tr" style="left:383px;top:264px">Latenzpfad</div>
<div class="t tr" style="left:560px;width:146px;text-align:right;top:264px">interleaved</div>
<div class="t tr" style="left:706px;width:124px;text-align:right;top:264px">interleaved</div>
<div class="t tr" style="left:383px;top:281px">Latenz</div>
<div class="t tr" style="left:532px;top:281px">ms</div>
<div class="t tr" style="left:560px;width:146px;text-align:right;top:281px">8</div>
<div class="t tr" style="left:706px;width:124px;text-align:right;top:281px">12</div>
<div class="a" style="left:380px;top:295px;width:452px;height:17px;background:#f4f4f4"></div>
<div class="t tr" style="left:383px;top:298px">Frame Coding Rate</div>
<div class="t tr" style="left:532px;top:298px">kBit/s</div>
<div class="t tr" style="left:560px;width:146px;text-align:right;top:298px">16</div>
<div class="t tr" style="left:706px;width:124px;text-align:right;top:298px">8</div>
<div class="t tr" style="left:383px;top:315px">FEC Coding Rate</div>
<div class="t tr" style="left:532px;top:315px">kBit/s</div>
<div class="t tr" style="left:560px;width:146px;text-align:right;top:315px">40</div>
<div class="t tr" style="left:706px;width:124px;text-align:right;top:315px">26</div>
<div class="a" style="left:380px;top:329px;width:452px;height:17px;background:#f4f4f4"></div>
<div class="t tr" style="left:383px;top:332px">Trellis Coding Rate</div>
<div class="t tr" style="left:532px;top:332px">kBit/s</div>
<div class="t tr" style="left:560px;width:146px;text-align:right;top:332px">128</div>
<div class="t tr" style="left:706px;width:124px;text-align:right;top:332px">68</div>
<div class="t tr" style="left:383px;top:349px">Aushandlung</div>
<div class="t tr" style="left:560px;width:146px;text-align:right;top:349px">adaptive</div>
<div class="t tr" style="left:706px;width:124px;text-align:right;top:349px">adaptive</div>
<div class="a" style="left:380px;top:363px;width:452px;height:17px;background:#f4f4f4"></div>
<div class="t tr" style="left:383px;top:383px">Signal/Rauschtoleranz</div>
<div class="t tr" style="left:532px;top:383px">dB</div>
<div class="t tr" style="left:560px;width:146px;text-align:right;top:383px">8</div>
<div class="t tr" style="left:706px;width:124px;text-align:right;top:383px">6</div>
<div class="a" style="left:380px;top:397px;width:452px;height:17px;background:#f4f4f4"></div>
<div class="t tr" style="left:383px;top:400px">Leitungsdämpfung</div>
<div class="t tr" style="left:532px;top:400px">dB</div>
<div class="t tr" style="left:560px;width:146px;text-align:right;top:400px">53</div>
<div class="t tr" style="left:706px;width:124px;text-align:right;top:400px">35</div>
<div class="t tr" style="left:383px;top:417px">Status</div>
<div class="t tr" style="left:560px;width:146px;text-align:right;top:417px">3ce20</div>
<div class="t tr" style="left:706px;width:124px;text-align:right;top:417px">34</div>
<div class="a" style="left:336px;top:448px;width:540px;height:68px;border:1px solid #c9c9c9;background:#fff"></div>
<div class="a" style="left:337px;top:449px;width:538px;height:32px;background:#f3f3f6"></div>
<div class="a" style="left:337px;top:498px;width:538px;height:17px;background:#f4f4f4"></div>
<div class="t tb" style="left:331px;width:120px;text-align:right;top:452px">Loss of</div>
<div class="t tb" style="left:331px;width:120px;text-align:right;top:467px">Signal</div>
<div class="t tr" style="left:331px;width:120px;text-align:right;top:484px">0</div>
<div class="t tr" style="left:331px;width:120px;text-align:right;top:501px">1</div>
<div class="t tb" style="left:414px;width:120px;text-align:right;top:452px">Loss of</div>
<div class="t tb" style="left:414px;width:120px;text-align:right;top:467px">Frame</div>
<div class="t tr" style="left:414px;width:120px;text-align:right;top:484px">0</div>
<div class="t tr" style="left:414px;width:120px;text-align:right;top:501px">1</div>
<div class="t tb" style="left:499px;width:120px;text-align:right;top:452px">Forward Error</div>
<div class="t tb" style="left:499px;width:120px;text-align:right;top:467px">Correction</div>
<div class="t tr" style="left:499px;width:120px;text-align:right;top:484px">273</div>
<div class="t tr" style="left:499px;width:120px;text-align:right;top:501px">0</div>
<div class="t tb" style="left:584px;width:120px;text-align:right;top:452px">Cyclic Redun-</div>
<div class="t tb" style="left:584px;width:120px;text-align:right;top:467px">dancy Check</div>
<div class="t tr" style="left:584px;width:120px;text-align:right;top:484px">3</div>
<div class="t tr" style="left:584px;width:120px;text-align:right;top:501px">0</div>
<div class="t tb" style="left:670px;width:120px;text-align:right;top:452px">No Cell</div>
<div class="t tb" style="left:670px;width:120px;text-align:right;top:467px">Delineation</div>
<div class="t tr" style="left:670px;width:120px;text-align:right;top:484px">1</div>
<div class="t tr" style="left:670px;width:120px;text-align:right;top:501px">6</div>
<div class="t tb" style="left:753px;width:120px;text-align:right;top:452px">Header Error</div>
<div class="t tb" style="left:753px;width:120px;text-align:right;top:467px">Control</div>
<div class="t tr" style="left:753px;width:120px;text-align:right;top:484px">5</div>
<div class="t tr" style="left:753px;width:120px;text-align:right;top:501px">0</div>
<div class="t tr" style="left:340px;top:484px">CPE</div>
<div class="t tr" style="left:340px;top:501px">COE</div>
<div class="a" style="left:672px;top:534px;width:100px;height:21px;border:1px solid #b0b0b0;border-radius:3px;background:linear-gradient(#ffffff,#f4f4f4 45%,#dedede 90%,#cfcfcf);box-shadow:0 1px 0 #e6e6e6"></div>
<div class="t" style="left:672px;width:100px;text-align:center;top:537px;font-size:13px;color:#111">Aktualisieren</div>
<div class="a" style="left:776px;top:534px;width:100px;height:21px;border:1px solid #b0b0b0;border-radius:3px;background:linear-gradient(#ffffff,#f4f4f4 45%,#dedede 90%,#cfcfcf);box-shadow:0 1px 0 #e6e6e6"></div>
<div class="t" style="left:776px;width:100px;text-align:center;top:537px;font-size:13px;color:#111">Hilfe</div>

<div class="a" style="left:5px;top:116px;width:1019px;height:1px;background:#74787e"></div>
<!-- STATUS BAR -->
<div class="a" style="left:0;top:578px;width:1024px;height:1px;background:#707378"></div>
<div class="a" style="left:0;top:579px;width:1024px;height:19px;background:linear-gradient(#f4f5f7,#e8eaed 45%,#d2d5da 85%,#c4c8ce)"></div>
<div class="a" style="left:0;top:598px;width:1024px;height:2px;background:#3b6fd6"></div>
<svg class="a" style="left:897px;top:581px" width="20" height="16" viewBox="0 0 20 16"><path d="M1 8 L3 6 V10Z M19 8 L17 6 V10Z" fill="#3a3d42"/><path d="M5.5 1.5 Q5.5 0.5 6.5 0.5 L11.5 0.5 L14.5 3.5 L14.5 14.5 Q14.5 15.5 13.5 15.5 L6.5 15.5 Q5.5 15.5 5.5 14.5 Z" fill="#45484d"/><path d="M11.5 0.5 L14.5 3.5 L11.5 3.5 Z" fill="#e8e8e8"/><path d="M7.5 7.5 H12.5 M7.5 10 H12.5 M7.5 12.5 H12.5 M9.5 6 V14 M11 6 V14" stroke="#7e8288" stroke-width="0.8"/></svg>
<svg class="a" style="left:922px;top:582px" width="18" height="14" viewBox="0 0 18 14"><rect x="0.5" y="2.5" width="16.5" height="11" rx="1" fill="#3c3f44"/><rect x="3" y="0.5" width="5" height="3" fill="#3c3f44"/><circle cx="7" cy="8" r="3.2" fill="#fff"/><circle cx="7" cy="8" r="1.8" fill="#3c3f44"/><rect x="12" y="4.5" width="3" height="2" fill="#fff"/></svg>
<div class="a" style="left:947px;top:582px;width:75px;height:16px;border:1px solid #c4c7cc;border-bottom:none;border-radius:3px 3px 0 0;background:#fff"></div>
<div class="a" style="left:1005px;top:583px;width:16px;height:15px;border-left:1px solid #d0d3d7;background:linear-gradient(#fafafa,#e2e4e7)"></div>
<div class="a" style="left:1009px;top:589px;width:0;height:0;border-top:4px solid #222;border-left:4px solid transparent;border-right:4px solid transparent"></div>
<svg class="a" style="left:950px;top:583px" width="14" height="14" viewBox="0 0 14 14"><circle cx="5.5" cy="5.5" r="3.6" fill="none" stroke="#3a3a3a" stroke-width="1.6"/><path d="M8.2 8.2 L12 12" stroke="#3a3a3a" stroke-width="2.2" stroke-linecap="round"/></svg>
<div class="t" style="left:967px;top:585px;font-size:12px;color:#111">100%</div>

</body></html>
